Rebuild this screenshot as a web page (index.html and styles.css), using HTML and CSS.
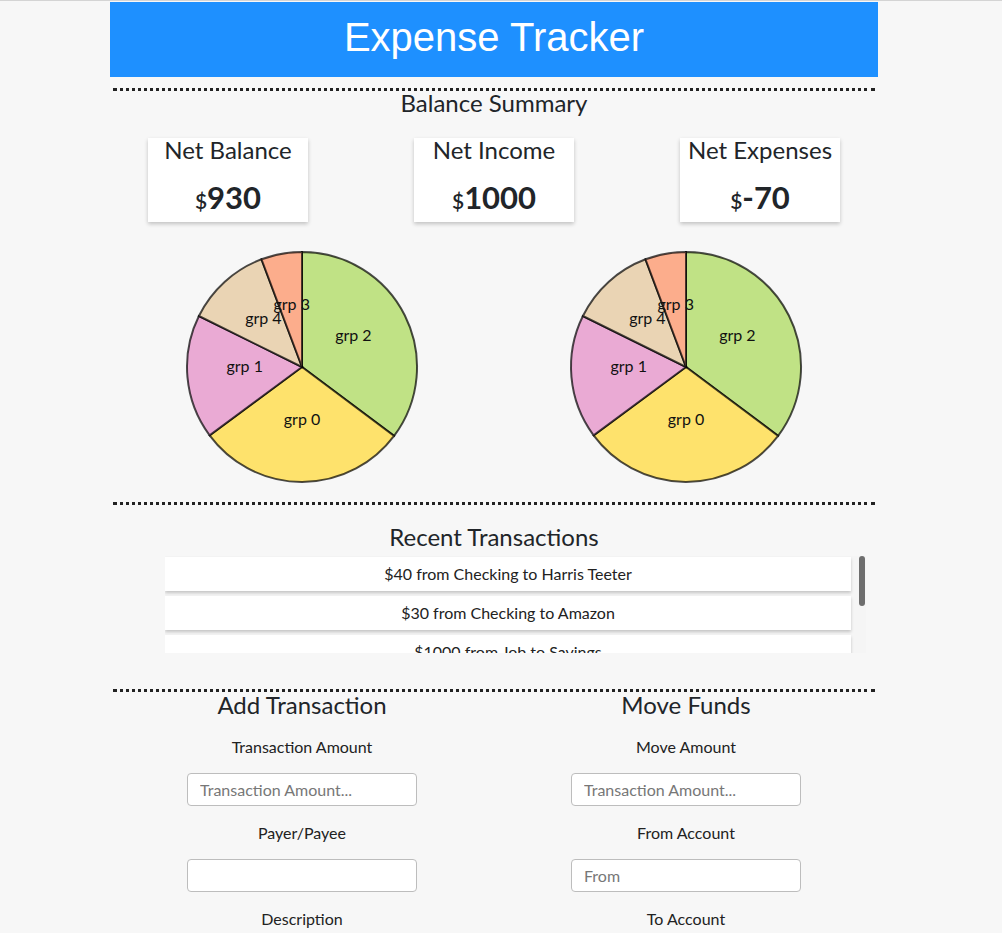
FILE: index.html
```html
<!DOCTYPE html>
<html lang="en">
<head>
<meta charset="utf-8">
<title>Expense Tracker</title>
<link rel="stylesheet" href="styles.css">
</head>
<body>
<div class="app">
  <header class="hdr"><h1>Expense Tracker</h1></header>
  <hr class="dots">
  <section class="summary">
    <h2 class="sec-title">Balance Summary</h2>
    <div class="cards">
      <div class="card"><div class="card-title">Net Balance</div><div class="card-val"><span class="cur">$</span>930</div></div>
      <div class="card"><div class="card-title">Net Income</div><div class="card-val"><span class="cur">$</span>1000</div></div>
      <div class="card"><div class="card-title">Net Expenses</div><div class="card-val"><span class="cur">$</span>-70</div></div>
    </div>
    <div class="pies">
      <div class="pie-col">
        <svg class="pie" width="250" height="250" viewBox="-125 -125 250 250">
          <g class="slices">
            <path fill="#c0e285" d="M0,-115A115,115 0 0 1 92.1,68.9L0,0Z"/>
            <path fill="#fee26c" d="M92.1,68.9A115,115 0 0 1 -92.4,68.4L0,0Z"/>
            <path fill="#eaaad4" d="M-92.4,68.4A115,115 0 0 1 -103.1,-51L0,0Z"/>
            <path fill="#ead4b4" d="M-103.1,-51A115,115 0 0 1 -40.5,-107.7L0,0Z"/>
            <path fill="#fcad8c" d="M-40.5,-107.7A115,115 0 0 1 0,-115L0,0Z"/>
          </g>
          <g class="labels">
            <text x="51.4" y="-25.7">grp 2</text>
            <text x="0" y="57.5">grp 0</text>
            <text x="-57.3" y="5.1">grp 1</text>
            <text x="-38.6" y="-42.6">grp 4</text>
            <text x="-10.3" y="-56.6">grp 3</text>
          </g>
        </svg>
      </div>
      <div class="pie-col">
        <svg class="pie" width="250" height="250" viewBox="-125 -125 250 250">
          <g class="slices">
            <path fill="#c0e285" d="M0,-115A115,115 0 0 1 92.1,68.9L0,0Z"/>
            <path fill="#fee26c" d="M92.1,68.9A115,115 0 0 1 -92.4,68.4L0,0Z"/>
            <path fill="#eaaad4" d="M-92.4,68.4A115,115 0 0 1 -103.1,-51L0,0Z"/>
            <path fill="#ead4b4" d="M-103.1,-51A115,115 0 0 1 -40.5,-107.7L0,0Z"/>
            <path fill="#fcad8c" d="M-40.5,-107.7A115,115 0 0 1 0,-115L0,0Z"/>
          </g>
          <g class="labels">
            <text x="51.4" y="-25.7">grp 2</text>
            <text x="0" y="57.5">grp 0</text>
            <text x="-57.3" y="5.1">grp 1</text>
            <text x="-38.6" y="-42.6">grp 4</text>
            <text x="-10.3" y="-56.6">grp 3</text>
          </g>
        </svg>
      </div>
    </div>
  </section>
  <hr class="dots dots-b">
  <section class="recent">
    <h2 class="sec-title recent-title">Recent Transactions</h2>
    <div class="scroll-wrap">
      <div class="scroll">
        <div class="item">$40 from Checking to Harris Teeter</div>
        <div class="item">$30 from Checking to Amazon</div>
        <div class="item">$1000 from Job to Savings</div>
        <div class="item">$20 from Savings to Checking</div>
        <div class="item">$10 from Checking to Starbucks</div>
      </div>
      <div class="thumb"></div>
    </div>
  </section>
  <hr class="dots dots-c">
  <section class="forms">
    <div class="form">
      <h2 class="sec-title">Add Transaction</h2>
      <label class="lbl">Transaction Amount</label>
      <input class="inp" type="text" placeholder="Transaction Amount...">
      <label class="lbl">Payer/Payee</label>
      <input class="inp" type="text">
      <label class="lbl">Description</label>
      <input class="inp" type="text">
    </div>
    <div class="form">
      <h2 class="sec-title">Move Funds</h2>
      <label class="lbl">Move Amount</label>
      <input class="inp" type="text" placeholder="Transaction Amount...">
      <label class="lbl">From Account</label>
      <input class="inp" type="text" placeholder="From">
      <label class="lbl">To Account</label>
      <input class="inp" type="text" placeholder="To">
    </div>
  </section>
</div>
</body>
</html>
```

FILE: styles.css
```css
* { box-sizing: border-box; }
html, body { margin: 0; padding: 0; }
body {
  background: #f7f7f7;
  border-top: 1px solid #d4d4d4;
  font-family: Lato, "Noto Sans", sans-serif;
  color: #212529;
}
.app {
  width: 768px;
  margin-left: 110px;
  padding-top: 1px;
}
.hdr {
  background: #1e90ff;
  height: 75px;
  display: flex;
  align-items: center;
  justify-content: center;
  padding-bottom: 5px;
}
.hdr h1 {
  margin: 0;
  font-family: "Liberation Sans", Arial, sans-serif;
  font-weight: 400;
  font-size: 40px;
  color: #fff;
  line-height: 1;
}
.dots {
  border: 0;
  border-top: 3px dotted #222;
  height: 0;
  margin: 11px 3px 0;
}
.dots-b { margin-top: 10px; }
.dots-c { margin-top: 36px; }
.sec-title {
  margin: 0;
  font-size: 24px;
  font-weight: 400;
  line-height: 24px;
  text-align: center;
  color: #212529;
}
.cards {
  display: flex;
  justify-content: center;
  gap: 106px;
  margin-top: 23px;
}
.card {
  width: 160px;
  height: 84px;
  background: #fff;
  box-shadow: 0 2px 4px rgba(0,0,0,0.22);
  text-align: center;
}
.card-title {
  font-size: 24px;
  line-height: 24px;
}
.card-val {
  margin-top: 15px;
  font-size: 31px;
  font-weight: 700;
  line-height: 40px;
}
.cur {
  font-size: 21px;
  font-weight: 600;
}
.pies {
  display: grid;
  grid-template-columns: 1fr 1fr;
  margin-top: 20px;
}
.pie-col {
  display: flex;
  justify-content: center;
}
.pie { display: block; }
.slices path {
  stroke: #000;
  stroke-opacity: 0.7;
  stroke-width: 2;
}
.labels text {
  font-family: Lato, "Noto Sans", sans-serif;
  font-size: 16px;
  fill: #111;
  text-anchor: middle;
}
.recent-title { margin-top: 20px; }
.scroll-wrap {
  position: relative;
  width: 701px;
  margin: 7px 0 0 55px;
}
.scroll {
  height: 97px;
  padding-top: 1px;
  overflow: hidden;
  background: #f5f5f5;
}
.thumb {
  position: absolute;
  top: 0;
  right: 1px;
  width: 6px;
  height: 50px;
  border-radius: 3px;
  background: #6e6e6e;
}
.item {
  width: 686px;
  height: 34px;
  margin-bottom: 5px;
  padding-bottom: 2px;
  background: #fff;
  box-shadow: 0 2px 3px rgba(0,0,0,0.2);
  display: flex;
  align-items: center;
  justify-content: center;
  font-size: 16px;
  color: #222;
}
.forms {
  display: grid;
  grid-template-columns: 1fr 1fr;
}
.form {
  display: flex;
  flex-direction: column;
  align-items: center;
}
.form .sec-title { line-height: 26px; }
.lbl {
  display: block;
  font-size: 16px;
  line-height: 20px;
  margin-top: 19px;
  color: #222;
}
.inp {
  display: block;
  width: 230px;
  height: 33px;
  margin-top: 16px;
  border: 1px solid #bdbdbd;
  border-radius: 4px;
  background: #fff;
  padding: 0 12px 1px;
  font-family: Lato, "Noto Sans", sans-serif;
  font-size: 16px;
  color: #333;
}
.inp::placeholder { color: #777; }
.inp + .lbl { margin-top: 17px; }
```
